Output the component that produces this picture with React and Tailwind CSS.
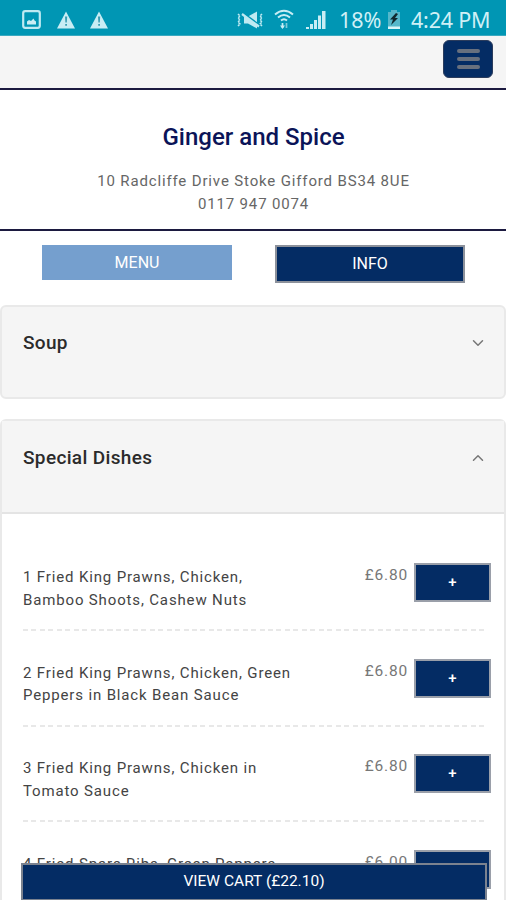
import { ChevronDown, ChevronUp } from 'lucide-react'

const dishes = [
    { id: 1, lines: ['1 Fried King Prawns, Chicken,', 'Bamboo Shoots, Cashew Nuts'], price: '£6.80' },
    { id: 2, lines: ['2 Fried King Prawns, Chicken, Green', 'Peppers in Black Bean Sauce'], price: '£6.80' },
    { id: 3, lines: ['3 Fried King Prawns, Chicken in', 'Tomato Sauce'], price: '£6.80' },
    { id: 4, lines: ['4 Fried Spare Ribs, Green Peppers'], price: '£6.00' },
]

function WarningIcon() {
    return (
        <svg width="20" height="18" viewBox="0 0 20 18">
            <path d="M10 0.5 19 17.5H1Z" fill="#c9edf4" />
            <path d="M9 5.5h2.2l-.4 6H9.4zM9.2 13h1.8v1.8H9.2z" fill="#3a9db3" />
        </svg>
    )
}

function StatusBar() {
    return (
        <div className="h-9 bg-[#0096b4] border-b border-[#3aa9c0] flex items-center justify-between pl-[22px] pr-[15px] pt-1">
            <div className="flex items-center">
                <svg width="19" height="19" viewBox="0 0 19 19">
                    <rect x="1.2" y="1.2" width="16.6" height="16.6" rx="2" fill="none" stroke="#bfeaf2" strokeWidth="2.2" />
                    <path d="M5 14.5v-3l2-1.5 2 1 2.5-2.5 1 2 1.5 1v3z" fill="#c9edf4" />
                </svg>
                <div className="ml-[15px]"><WarningIcon /></div>
                <div className="ml-[13px]"><WarningIcon /></div>
            </div>
            <div className="flex items-center text-[#d0f0f6]">
                <svg width="29" height="20" viewBox="0 0 29 20" fill="none" stroke="#bfeaf2">
                    <path d="M2 4l2 2-2 2 2 2-2 2 2 2-2 2M26 4l-2 2 2 2-2 2 2 2-2 2 2 2" strokeWidth="1.5" strokeDasharray="2.2 .8" />
                    <path d="M8 6.5h4l9-5v17l-9-5H8z" fill="#bfeaf2" stroke="none" />
                    <path d="M6.5 3 23.5 15.5" stroke="#0096b4" strokeWidth="2.5" />
                    <path d="M6 4 23 16.5" strokeWidth="2.2" />
                </svg>
                <svg width="20" height="21" viewBox="0 0 20 21" fill="none" stroke="#c9edf4" className="ml-[9px]">
                    <path d="M1 5.5Q10-2 19 5.5M4 8.5Q10 3.5 16 8.5M7 11.5Q10 9 13 11.5" strokeWidth="2" />
                    <path d="M8.5 19v-5" strokeWidth="1.7" />
                    <path d="M12.5 14v5" strokeWidth="1.7" stroke="#7fcbd9" />
                    <path d="M6 16.5 8.5 20l2.5-3.500z" fill="#c9edf4" stroke="none" />
                </svg>
                <svg width="20" height="20" viewBox="0 0 20 20" fill="#c9edf4" className="ml-[12px]">
                    <path d="M0 17h3v2H0zM4 14h3v5H4zM8 10h3v9H8zM12 5.5h3V19h-3zM16 1h3.5v18H16z" />
                </svg>
                <span className="ml-[13px] w-[44px] whitespace-nowrap font-['Noto_Sans'] text-[21.5px] leading-6">18%</span>
                <svg width="14" height="19" viewBox="0 0 14 19" className="ml-[4px]">
                    <path d="M4 0h6v2h3v17H1V2h3z" fill="#55b7ca" />
                    <path d="M1 16.5h12V19H1z" fill="#d9f5f9" />
                    <path d="M9 3 3 9.5h3l-2 5.5 7-7H8l3-4z" fill="#10282e" />
                </svg>
                <span className="ml-[10px] w-[80px] whitespace-nowrap font-['Noto_Sans'] text-[21.5px] leading-6 tracking-[-0.2px]">4:24 PM</span>
            </div>
        </div>
    )
}

function AddButton() {
    return (
        <button className="w-[77px] h-[39px] shrink-0 bg-[#042c64] border-2 border-[#9a9fa9] text-white font-medium text-[15px] leading-none">
            +
        </button>
    )
}

function Dish({ dish }) {
    return (
        <div className="relative h-[95.6px] flex items-start pl-[21px] pr-[13px]">
            <div className="flex-1 pt-[3px] text-[15px] leading-[22.5px] tracking-[0.85px] text-[#444] whitespace-nowrap">
                {dish.lines.map(line => <p key={line}>{line}</p>)}
            </div>
            <span className="pt-px mr-[6px] text-[15.5px] leading-[22.5px] tracking-[0.8px] text-[#777]">{dish.price}</span>
            <AddButton />
            <div className="absolute left-[21px] right-[20px] top-[66px] h-[2px] bg-[repeating-linear-gradient(90deg,#e8e8e8_0_5px,transparent_5px_8.45px)]" />
        </div>
    )
}

export default function App() {
    return (
        <div className="relative w-full h-[900px] overflow-hidden bg-white font-[Roboto,sans-serif]">
            <StatusBar />

            <header className="h-[54px] bg-[#f5f5f5] border-b-2 border-[#1c1a40] flex justify-end pt-[4px] pr-[13px]">
                <button className="w-[50px] h-[38px] rounded-md bg-[#042c64] border border-[#2b3c5c] flex flex-col items-center justify-center gap-[4px] pb-px">
                    <span className="w-[23px] h-1 rounded-sm bg-[#68707e]" />
                    <span className="w-[23px] h-1 rounded-sm bg-[#68707e]" />
                    <span className="w-[23px] h-1 rounded-sm bg-[#68707e]" />
                </button>
            </header>

            <section className="h-[141px] border-b-2 border-[#1c1a40] text-center pt-[31px]">
                <h1 className="pl-px text-[24px] leading-8 font-medium text-[#0b1458]">Ginger and Spice</h1>
                <div className="mt-[17px] pl-px text-[15px] leading-[22.5px] tracking-[0.85px] text-[#666]">
                    <p>10 Radcliffe Drive Stoke Gifford BS34 8UE</p>
                    <p>0117 947 0074</p>
                </div>
            </section>

            <div className="h-[74px] flex items-start gap-[43px] pl-[42px] pt-[14px]">
                <button className="w-[190px] h-[35px] bg-[#759fce] text-white text-[16px]">MENU</button>
                <button className="w-[190px] h-[38px] bg-[#042c64] border-2 border-[#8c919b] text-white text-[16px]">INFO</button>
            </div>

            <section className="h-[94px] bg-[#f5f5f5] border-2 border-[#e9e9e9] rounded-md flex justify-between pl-[21px] pr-[17px] pt-[24px]">
                <h2 className="text-[19px] leading-6 font-medium tracking-[0.3px] text-[#2b2b2b]">Soup</h2>
                <ChevronDown size={18} strokeWidth={2} className="mt-[3px] text-[#777]" />
            </section>

            <section className="mt-[20px] h-[600px] border-2 border-[#e9e9e9] rounded-md">
                <div className="h-[93px] bg-[#f5f5f5] border-b-2 border-[#e4e4e4] flex justify-between pl-[21px] pr-[17px] pt-[25px]">
                    <h2 className="text-[19px] leading-6 font-medium tracking-[0.35px] text-[#2b2b2b]">Special Dishes</h2>
                    <ChevronUp size={18} strokeWidth={2} className="mt-[3px] text-[#777]" />
                </div>
                <div className="pt-[49px]">
                    {dishes.map(dish => <Dish key={dish.id} dish={dish} />)}
                </div>
            </section>

            <button className="absolute left-[21px] right-[19px] top-[863px] h-[38px] bg-[#042c64] border-2 border-[#7b828f] text-white text-[15.5px]">
                VIEW CART (£22.10)
            </button>
        </div>
    )
}
